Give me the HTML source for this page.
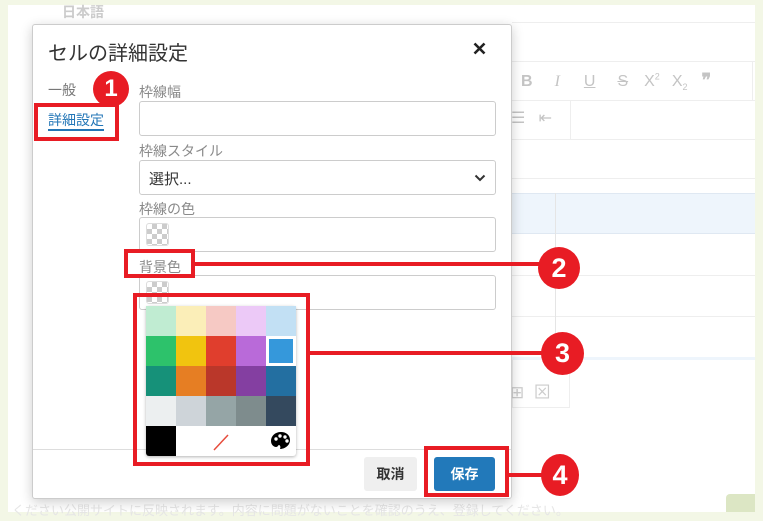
<!DOCTYPE html>
<html><head><meta charset="utf-8"><style>
*{box-sizing:border-box;margin:0;padding:0}
body{width:763px;height:521px;background:#f3f7e6;position:relative;overflow:hidden;font-family:"Liberation Sans","Noto Sans CJK JP",sans-serif;color:#333}
.a{position:absolute}
.lbl{position:absolute;font-size:14px;color:#8a8a8a;left:139px}
.inp{position:absolute;left:139px;width:357px;height:35px;border:1px solid #ccc;border-radius:3px;background:#fff}
.chk{position:absolute;left:6px;top:5px;width:23px;height:23px;border-radius:3px;border:1px solid #ddd;background:conic-gradient(#ccc 25%,#fff 0 50%,#ccc 0 75%,#fff 0) 0 0/10px 10px}
.red{position:absolute;border:4px solid #e81c24}
.rl{position:absolute;height:4px;background:#e81c24}
.c{position:absolute;width:36px;height:36px;border-radius:50%;background:#e81c24;color:#fff;font-weight:bold;font-size:24px;text-align:center;line-height:36px}
.pal{position:absolute;left:146px;top:306px;width:150px;height:150px;display:grid;grid-template-columns:repeat(5,30px);grid-template-rows:repeat(5,30px);background:#fff;border-radius:3px;box-shadow:0 1px 3px rgba(0,0,0,.3)}
</style></head><body>
<div class="a" style="left:8px;top:5px;width:747px;height:507px;background:#fff"></div>
<div class="a" style="left:62px;top:2px;font-size:14px;color:#ccc;font-weight:bold">日本語</div>
<div class="a" style="left:512px;top:22px;width:243px;height:1px;background:#eee"></div>
<div class="a" style="left:512px;top:61px;width:243px;height:1px;background:#eee"></div>
<div class="a" style="left:512px;top:100px;width:243px;height:1px;background:#eee"></div>
<div class="a" style="left:512px;top:139px;width:243px;height:1px;background:#eee"></div>
<div class="a" style="left:570px;top:100px;width:1px;height:39px;background:#eee"></div>
<div class="a" style="left:752px;top:61px;width:1px;height:39px;background:#eee"></div>
<div class="a" style="left:521px;top:70px;font-size:16px;color:#c4c4c4;white-space:nowrap">
<span style="font-weight:bold">B</span><i style="font-family:'Liberation Serif';margin-left:22px">I</i><u style="margin-left:24px">U</u><s style="margin-left:22px">S</s><span style="margin-left:16px">X<sup style="font-size:9px">2</sup></span><span style="margin-left:12px">X<sub style="font-size:9px">2</sub></span><b style="margin-left:14px;font-size:18px">❞</b></div>
<div class="a" style="left:511px;top:108px;font-size:16px;color:#c4c4c4">☰&nbsp;&nbsp;&nbsp;⇤</div>
<div class="a" style="left:512px;top:178px;width:243px;height:1px;background:#eee"></div>
<div class="a" style="left:512px;top:193px;width:243px;height:41px;background:#eef5fc;border-top:1px solid #dfe8f2;border-bottom:1px solid #dfe8f2"></div>
<div class="a" style="left:512px;top:275px;width:243px;height:1px;background:#eee"></div>
<div class="a" style="left:512px;top:316px;width:243px;height:1px;background:#eee"></div>
<div class="a" style="left:512px;top:357px;width:243px;height:3px;background:#eef5fc"></div>
<div class="a" style="left:555px;top:193px;width:1px;height:165px;background:#e5e5e5"></div>
<div class="a" style="left:512px;top:360px;width:58px;height:48px;border:1px solid #eee;border-top:0"></div>
<div class="a" style="left:510px;top:378px;font-size:17px;color:#ccc">⊞&nbsp;&nbsp;⊠</div>
<div class="a" style="left:726px;top:494px;width:29px;height:18px;background:#dce6c4;border-radius:4px 0 0 0"></div>
<div class="a" style="left:12px;top:500px;font-size:13px;color:#e6e6e6;white-space:nowrap">ください公開サイトに反映されます。内容に問題がないことを確認のうえ、登録してください。</div>
<!-- dialog -->
<div class="a" style="left:32px;top:24px;width:480px;height:475px;background:#fff;border:1px solid #ccc;border-radius:3px;box-shadow:0 3px 12px rgba(0,0,0,.2)"></div>
<div class="a" style="left:48px;top:37px;font-size:20px;color:#333">セルの詳細設定</div>
<svg class="a" style="left:473px;top:42px" width="13" height="13"><path d="M1.5 1.5L11.5 11.5M11.5 1.5L1.5 11.5" stroke="#222" stroke-width="2.6"/></svg>
<div class="a" style="left:48px;top:80px;font-size:14px;color:#777">一般</div>
<div class="a" style="left:48px;top:111px;font-size:14px;color:#2376b7;border-bottom:2px solid #2376b7;line-height:18px">詳細設定</div>
<div class="lbl" style="top:82px">枠線幅</div>
<div class="inp" style="top:101px"></div>
<div class="lbl" style="top:141px">枠線スタイル</div>
<div class="inp" style="top:160px"><span class="a" style="left:9px;top:7px;font-size:15px;color:#333">選択...</span><svg class="a" style="right:9px;top:13px" width="12" height="8"><path d="M1.5 1.5L6 6 10.5 1.5" fill="none" stroke="#333" stroke-width="2"/></svg></div>
<div class="lbl" style="top:199px">枠線の色</div>
<div class="inp" style="top:217px"><div class="chk"></div></div>
<div class="lbl" style="top:257px">背景色</div>
<div class="inp" style="top:275px"><div class="chk"></div></div>
<div class="a" style="left:33px;top:449px;width:478px;height:1px;background:#ddd"></div>
<div class="a" style="left:364px;top:457px;width:53px;height:34px;background:#efefef;border-radius:3px;font-size:14px;font-weight:bold;text-align:center;line-height:34px;color:#333">取消</div>
<div class="a" style="left:434px;top:457px;width:61px;height:34px;background:#2279ba;border-radius:3px;font-size:14px;font-weight:bold;text-align:center;line-height:34px;color:#fff">保存</div>
<div class="pal">
<div style="background:#c0ecd2"></div><div style="background:#fbeeb8"></div><div style="background:#f6c9c4"></div><div style="background:#ecc9f7"></div><div style="background:#c2e0f4"></div>
<div style="background:#2dc26b"></div><div style="background:#f1c40f"></div><div style="background:#e03e2d"></div><div style="background:#b96ad9"></div><div style="background:#fff;padding:3px"><div style="background:#3598db;width:24px;height:24px"></div></div>
<div style="background:#169179"></div><div style="background:#e67e23"></div><div style="background:#ba372a"></div><div style="background:#843fa1"></div><div style="background:#236fa1"></div>
<div style="background:#eceff0"></div><div style="background:#ced4d9"></div><div style="background:#95a5a6"></div><div style="background:#7e8c8d"></div><div style="background:#34495e"></div>
<div style="background:#000;border-radius:0 0 0 3px"></div><div></div><div><svg width="30" height="30"><line x1="8" y1="24" x2="22" y2="9" stroke="#e74c3c" stroke-width="1.5"/></svg></div><div></div><div><svg width="30" height="30" viewBox="0 0 30 30"><path d="M15 6c-6 0-10 4-10 9 0 4 3 6 5 6s2-2 3-2 2 2 1 4c4 0 10-3 10-9 0-5-4-8-9-8z" fill="#000"/><circle cx="10" cy="13" r="1.7" fill="#fff"/><circle cx="14" cy="10" r="1.7" fill="#fff"/><circle cx="19" cy="11" r="1.7" fill="#fff"/><circle cx="21" cy="15" r="1.7" fill="#fff"/></svg></div>
</div>
<div class="red" style="left:34px;top:103px;width:85px;height:38px"></div>
<div class="c" style="left:93px;top:71px">1</div>
<div class="red" style="left:124px;top:249px;width:71px;height:29px"></div>
<div class="rl" style="left:194px;top:262px;width:350px"></div>
<div class="c" style="left:538px;top:247px;width:42px;height:42px;line-height:42px;font-size:27px">2</div>
<div class="red" style="left:133px;top:293px;width:177px;height:173px"></div>
<div class="rl" style="left:309px;top:351px;width:235px"></div>
<div class="c" style="left:541px;top:332px;width:43px;height:43px;line-height:43px;font-size:27px">3</div>
<div class="red" style="left:424px;top:446px;width:85px;height:51px"></div>
<div class="rl" style="left:508px;top:473px;width:36px"></div>
<div class="c" style="left:541px;top:454px;width:38px;height:42px;line-height:42px;font-size:27px">4</div>
</body></html>
